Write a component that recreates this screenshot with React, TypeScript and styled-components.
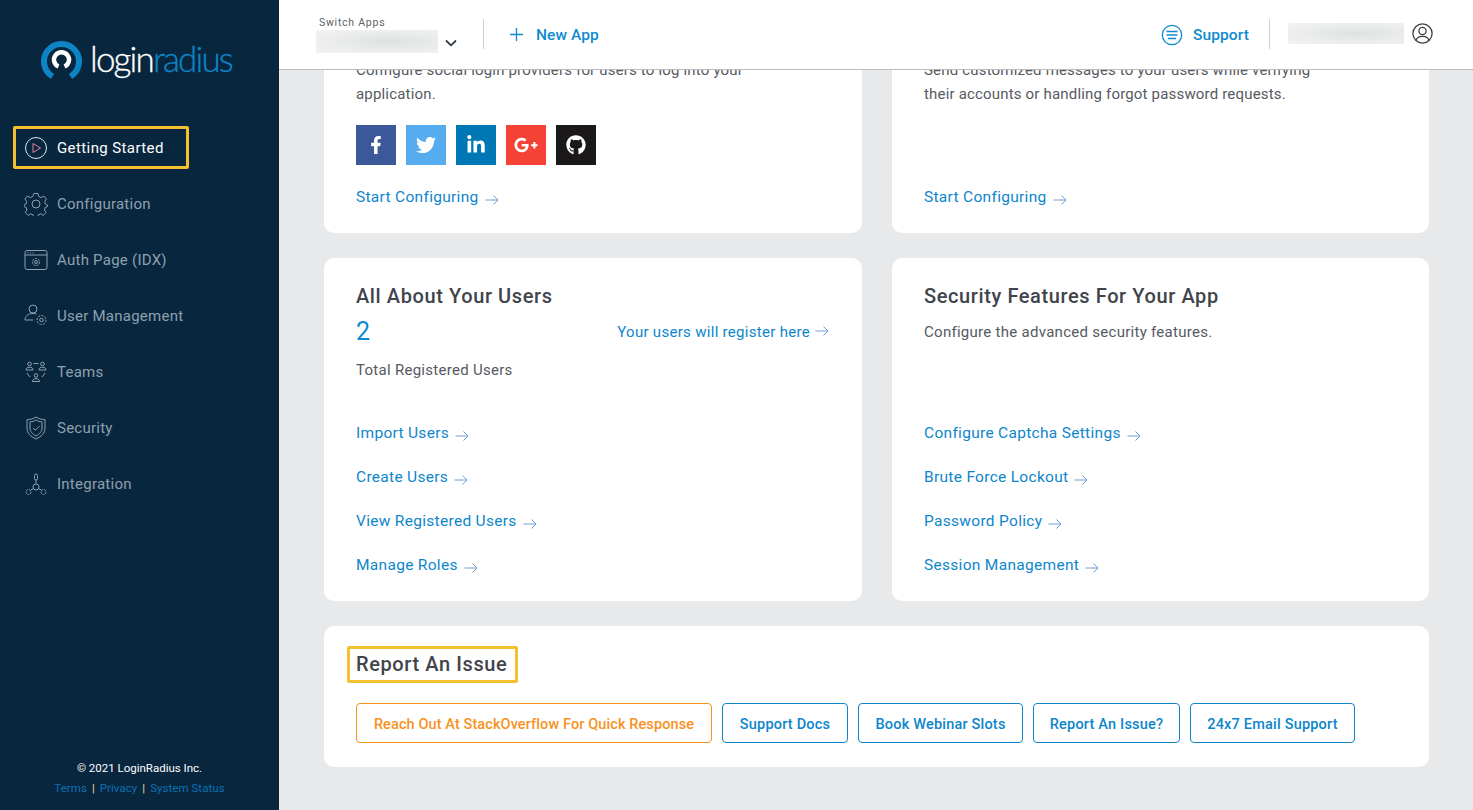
import { useLayoutEffect, useRef } from "react";
import styled, { createGlobalStyle } from "styled-components";
import { FaFacebookF, FaTwitter, FaLinkedinIn, FaGooglePlusG, FaGithub } from "react-icons/fa";

const Global = createGlobalStyle`
  html, body { margin: 0; height: 100%; overflow: hidden; }
  #root { height: 100%; }
  * { box-sizing: border-box; }
  body { font-family: Roboto, "Liberation Sans", sans-serif; }
`;

const Shell = styled.div`
  display: flex;
  height: 810px;
  background: #e8e9eb;
`;
const Sidebar = styled.aside`
  width: 279px;
  flex: none;
  background: #08263e;
  display: flex;
  flex-direction: column;
`;
const LogoRow = styled.div`
  display: flex;
  align-items: center;
  height: 126px;
  padding: 0 0 8px 41px;
  gap: 8px;
`;
const LogoText = styled.span`
  font-family: Lato, sans-serif;
  font-weight: 300;
  font-size: 35px;
  letter-spacing: -1.85px;
  color: #fff;
  line-height: 40px;
  margin-top: -2px;
  -webkit-text-stroke: 0.3px currentColor;
  b { font-weight: 300; color: #0d84c6; }
`;
const Nav = styled.nav`
  display: flex;
  flex-direction: column;
  gap: 13px;
  padding-left: 13px;
  flex: 1;
`;
const NavItem = styled.div<{ $active?: boolean }>`
  display: flex;
  align-items: center;
  width: 176px;
  height: 43px;
  padding-left: 9px;
  gap: 9px;
  white-space: nowrap;
  border: 3px solid ${(p) => (p.$active ? "#f3c130" : "transparent")};
  border-radius: 2px;
  color: ${(p) => (p.$active ? "#fff" : "#8fa0ae")};
  font-size: 15px;
  letter-spacing: ${(p) => (p.$active ? "0.4px" : "0.25px")};
  svg { flex: none; width: 24px; height: 24px; margin-left: -1px; }
`;
const SideFooter = styled.footer`
  text-align: center;
  font-size: 11.5px;
  padding: 0 0 12px;
  line-height: 20px;
  color: #fff;
`;
const FooterLinks = styled.div`
  color: #0c71b4;
  letter-spacing: 0.05px;
  i { font-style: normal; color: #e9d9a0; margin: 0 5px; }
`;

const Column = styled.div`
  flex: 1;
  min-width: 0;
  display: flex;
  flex-direction: column;
`;
const Header = styled.header`
  height: 70px;
  flex: none;
  background: #fff;
  border-bottom: 1px solid #b9bbbd;
  display: flex;
  align-items: center;
  padding: 0 40px 0 37px;
`;
const Switcher = styled.div`
  width: 167px;
  display: flex;
  flex-direction: column;
  margin-top: -1px;
`;
const SwitchLabel = styled.span`
  font-size: 10.5px;
  letter-spacing: 0.75px;
  color: #5a5f66;
  padding: 1px 0 0 3px;
  line-height: 14px;
`;
const SwitchRow = styled.div`
  display: flex;
  align-items: center;
  gap: 7px;
`;
const Blur = styled.div<{ $w: number; $h: number }>`
  width: ${(p) => p.$w}px;
  height: ${(p) => p.$h}px;
  background: radial-gradient(ellipse at 60% 50%, #dfe0e1 0%, #ebecec 55%, #f3f3f3 100%);
`;
const Divider = styled.div`
  width: 1px;
  height: 30px;
  margin-top: -1px;
  background: #cfd1d3;
`;
const HeaderLink = styled.div`
  display: flex;
  align-items: center;
  color: #0d8bd0;
  font-weight: 500;
  font-size: 15.5px;
  letter-spacing: 0.1px;
`;
const NewApp = styled(HeaderLink)`
  margin-left: 25px;
  gap: 12px;
`;
const Support = styled(HeaderLink)`
  margin-left: auto;
  gap: 10px;
`;
const HeaderRight = styled.div`
  display: flex;
  align-items: center;
  margin-left: 20px;
  gap: 18px;
`;
const UserBox = styled.div`
  display: flex;
  align-items: center;
  gap: 8px;
  margin-top: -2px;
`;

const Scroller = styled.main`
  flex: 1;
  overflow: hidden;
`;
const Content = styled.div`
  display: flex;
  flex-direction: column;
  gap: 25px;
  padding: 24px 44px 43px 45px;
`;
const Grid = styled.div`
  display: grid;
  grid-template-columns: 538px 537px;
  column-gap: 30px;
  row-gap: 25px;
`;
const Card = styled.section`
  background: #fff;
  border-radius: 10px;
  padding: 24px 32px;
  color: #4a4f57;
`;
const TopCard = styled(Card)`
  height: 260px;
  display: flex;
  flex-direction: column;
`;
const Title = styled.h2`
  margin: 0;
  font-size: 20px;
  line-height: 28px;
  font-weight: 500;
  letter-spacing: 0.6px;
  color: #40444b;
`;
const Body = styled.p`
  margin: 0;
  font-size: 15px;
  line-height: 24px;
  letter-spacing: 0.28px;
  color: #555a62;
`;
const TopBody = styled(Body)`
  margin-top: 33px;
  max-width: 400px;
  letter-spacing: 0.18px;
`;
const Social = styled.div`
  display: flex;
  gap: 10px;
  margin-top: 19px;
`;
const Tile = styled.div<{ $bg: string }>`
  width: 40px;
  height: 40px;
  background: ${(p) => p.$bg};
  color: #fff;
  display: flex;
  align-items: center;
  justify-content: center;
  font-size: 20px;
`;
const Push = styled.div`
  margin-top: auto;
`;
const LinkText = styled.a`
  display: inline-flex;
  align-items: center;
  gap: 6px;
  color: #0d86cb;
  font-size: 15.5px;
  line-height: 24px;
  letter-spacing: 0.3px;
  white-space: nowrap;
  svg { margin-top: 5px; }
`;
const StatRow = styled.div`
  display: flex;
  align-items: center;
  justify-content: space-between;
  height: 28px;
  margin-top: 8px;
  margin-right: 1px;
`;
const Stat = styled.span`
  font-size: 25px;
  color: #0d8bd0;
  line-height: 28px;
`;
const RegisterLink = styled(LinkText)`
  font-size: 15px;
  letter-spacing: 0.3px;
  gap: 5px;
  svg { margin-top: -2px; }
`;
const StatLabel = styled(Body)`
  margin-top: 12px;
  height: 24px;
`;
const Desc = styled(Body)`
  margin-top: 10px;
  height: 50px;
`;
const LinkList = styled.div`
  display: flex;
  flex-direction: column;
  align-items: flex-start;
  gap: 20px;
  margin-top: 39px;
`;
const DescLinks = styled(LinkList)`
  margin-top: 51px;
`;
const Tall = styled(Card)`
  height: 343px;
`;
const IssueTitle = styled(Title)`
  display: inline-block;
  margin: -4px 0 0 -9px;
  padding: 2px 8px 3px 6px;
  border: 3px solid #f3c130;
  border-radius: 2px;
  font-size: 20px;
  line-height: 26px;
`;
const Buttons = styled.div`
  display: flex;
  gap: 10px;
  margin-top: 20px;
`;
const Btn = styled.button<{ $warn?: boolean; $w: number }>`
  width: ${(p) => p.$w}px;
  height: 40px;
  padding: 2px 0 0;
  background: #fff;
  border: 1px solid ${(p) => (p.$warn ? "#f7921e" : "#0d86cb")};
  color: ${(p) => (p.$warn ? "#f7921e" : "#0d86cb")};
  border-radius: 4px;
  font-family: inherit;
  font-size: 14.5px;
  font-weight: 500;
  letter-spacing: ${(p) => (p.$warn ? "0.1px" : "0.2px")};
`;

const Arrow = () => (
  <svg width="14" height="12" viewBox="0 0 14 12" fill="none" stroke="#6f9fd0" strokeWidth="1">
    <path d="M0.5 6h12.500M8.500 1.500 13 6l-4.500 4.500" />
  </svg>
);

const Item = ({ children }: { children: string }) => (
  <LinkText>
    {children} <Arrow />
  </LinkText>
);

const stroke = { fill: "none", stroke: "currentColor", strokeWidth: 1 };

const PlayIcon = () => (
  <svg viewBox="0 0 24 24" {...stroke}>
    <circle cx="12" cy="12" r="10.500" stroke="#dfe6ea" />
    <path d="M9 7.500v9l7.500-4.500z" stroke="#e87fa0" />
  </svg>
);
const GearIcon = () => (
  <svg viewBox="0 0 24 24" {...stroke}>
    <circle cx="12" cy="12" r="4" />
    <path d="M10 1.500h4l.7 3 2.400 1.100 2.700-1.600 2.700 3-1.700 2.500.5 2.500 2.200 1 0 1.500-2.400 1-.6 2.500 1.600 2.500-2.800 2.900-2.600-1.600-2.300 1-.7 3h-4l-.7-3-2.300-1-2.600 1.600-2.800-2.900 1.600-2.500-.6-2.500-2.400-1 0-1.500 2.200-1 .5-2.500-1.700-2.500 2.700-3 2.700 1.600 2.400-1.100z" />
  </svg>
);
const WindowIcon = () => (
  <svg viewBox="0 0 24 24" {...stroke}>
    <rect x="1" y="2.500" width="22" height="19" rx="2" />
    <path d="M1 7h22M3.500 4.800h1M6 4.800h1M8.500 4.800h1" />
    <circle cx="12" cy="14" r="1.500" />
    <circle cx="12" cy="14" r="3.500" strokeDasharray="2 1" />
  </svg>
);
const UserGearIcon = () => (
  <svg viewBox="0 0 24 24" {...stroke}>
    <circle cx="9" cy="5" r="4" />
    <path d="M1 16c0-4 3-6.500 8-6.500 1.500 0 2.500.2 3.500.6M1 16h8" />
    <circle cx="17.500" cy="16" r="1.800" />
    <circle cx="17.500" cy="16" r="4.500" strokeDasharray="2.200 1.200" />
  </svg>
);
const TeamIcon = () => (
  <svg viewBox="0 0 24 24" {...stroke}>
    <circle cx="5.500" cy="4" r="1.800" />
    <path d="M2 10c0-2 1.500-2.800 3.500-2.800S9 8 9 10z" />
    <circle cx="18.500" cy="4" r="1.800" />
    <path d="M15 10c0-2 1.500-2.800 3.500-2.800S22 8 22 10z" />
    <circle cx="12" cy="15.500" r="1.800" />
    <path d="M8.500 21.500c0-2 1.500-2.800 3.500-2.800s3.500.8 3.500 2.800z" />
    <path d="M9.500 3.500h5M3 13l3 4M21 13l-3 4" />
  </svg>
);
const ShieldIcon = () => (
  <svg viewBox="0 0 24 24" {...stroke}>
    <path d="M12 1c3 2 6 2.500 9 2.500V12c0 5-3.500 8.500-9 11-5.500-2.500-9-6-9-11V3.500C6 3.500 9 3 12 1z" />
    <path d="M12 4c2 1.200 4 1.700 6 1.800V12c0 3.500-2.400 6-6 8-3.600-2-6-4.500-6-8V5.800C8 5.700 10 5.200 12 4z" />
    <path d="M9 12l2.300 2.300L15.500 10" />
  </svg>
);
const NetworkIcon = () => (
  <svg viewBox="0 0 24 24" {...stroke}>
    <circle cx="12" cy="15" r="3" />
    <rect x="10.500" y="2" width="3" height="6" rx="1.500" />
    <path d="M12 8v4M9.500 16.500l-3 1.700M14.500 16.500l3 1.700" />
    <circle cx="4.500" cy="20" r="2.500" strokeDasharray="2 1" />
    <circle cx="19.500" cy="20" r="2.500" strokeDasharray="2 1" />
  </svg>
);

const LoginRadiusMark = () => (
  <svg width="41" height="41" viewBox="0 0 41 41" style={{ flex: "none" }}>
    <path d="M11.500 37.500A17.500 17.500 0 1 1 29.500 37.500" fill="none" stroke="#0d84c6" strokeWidth="6" />
    <path d="M17.500 27.500A7.500 7.500 0 1 1 23.500 27.500" fill="none" stroke="#fff" strokeWidth="4.500" />
  </svg>
);

const Plus = () => (
  <svg width="15" height="15" viewBox="0 0 15 15" stroke="#0d8bd0" strokeWidth="1.300">
    <path d="M7.500 1v13M1 7.500h13" />
  </svg>
);
const Chevron = () => (
  <svg width="12" height="8" viewBox="0 0 12 8" fill="none" stroke="#2f3a44" strokeWidth="1.800" style={{ marginTop: 2 }}>
    <path d="M1 1.500 6 6.300l5-4.800" />
  </svg>
);
const SupportIcon = () => (
  <svg width="22" height="22" viewBox="0 0 22 22" fill="none" stroke="#0d8bd0" strokeWidth="1.300">
    <circle cx="11" cy="11" r="9.700" />
    <path d="M5.500 7.500h11M5.500 11h11M7 14.500h8" />
  </svg>
);
const UserIcon = () => (
  <svg width="21" height="21" viewBox="0 0 21 21" fill="none" stroke="#3b3f45" strokeWidth="1.300">
    <circle cx="10.500" cy="10.500" r="9.600" />
    <circle cx="10.500" cy="8" r="3.600" />
    <path d="M4 17.500c.7-3 3-4.200 6.500-4.200s5.800 1.200 6.500 4.200" />
  </svg>
);

const menu = [
  { label: "Getting Started", icon: <PlayIcon />, active: true },
  { label: "Configuration", icon: <GearIcon /> },
  { label: "Auth Page (IDX)", icon: <WindowIcon /> },
  { label: "User Management", icon: <UserGearIcon /> },
  { label: "Teams", icon: <TeamIcon /> },
  { label: "Security", icon: <ShieldIcon /> },
  { label: "Integration", icon: <NetworkIcon /> },
];

const tiles = [
  { bg: "#3b5998", icon: <FaFacebookF size={18} /> },
  { bg: "#55acee", icon: <FaTwitter /> },
  { bg: "#0077b5", icon: <FaLinkedinIn /> },
  { bg: "#f44336", icon: <FaGooglePlusG size={24} /> },
  { bg: "#1a1818", icon: <FaGithub /> },
];

const buttons = [
  { label: "Support Docs", w: 126 },
  { label: "Book Webinar Slots", w: 165 },
  { label: "Report An Issue?", w: 147 },
  { label: "24x7 Email Support", w: 165 },
];

export default function App() {
  const scroller = useRef<HTMLElement>(null);

  // the page in the shot is scrolled down a bit
  useLayoutEffect(() => {
    if (scroller.current) scroller.current.scrollTop = scroller.current.scrollHeight;
  }, []);

  return (
    <Shell>
      <Global />
      <Sidebar>
        <LogoRow>
          <LoginRadiusMark />
          <LogoText>
            login<b>radius</b>
          </LogoText>
        </LogoRow>
        <Nav>
          {menu.map((m) => (
            <NavItem key={m.label} $active={m.active}>
              {m.icon}
              {m.label}
            </NavItem>
          ))}
        </Nav>
        <SideFooter>
          © 2021 LoginRadius Inc.
          <FooterLinks>
            Terms<i>|</i>Privacy<i>|</i>System Status
          </FooterLinks>
        </SideFooter>
      </Sidebar>
      <Column>
        <Header>
          <Switcher>
            <SwitchLabel>Switch Apps</SwitchLabel>
            <SwitchRow>
              <Blur $w={122} $h={23} />
              <Chevron />
            </SwitchRow>
          </Switcher>
          <Divider />
          <NewApp>
            <Plus />
            New App
          </NewApp>
          <Support>
            <SupportIcon />
            Support
          </Support>
          <HeaderRight>
            <Divider />
            <UserBox>
              <Blur $w={116} $h={21} />
              <UserIcon />
            </UserBox>
          </HeaderRight>
        </Header>
        <Scroller ref={scroller}>
          <Content>
            <Grid>
              <TopCard>
                <Title>Social Login</Title>
                <TopBody>Configure social login providers for users to log into your application.</TopBody>
                <Social>
                  {tiles.map((t) => (
                    <Tile key={t.bg} $bg={t.bg}>
                      {t.icon}
                    </Tile>
                  ))}
                </Social>
                <Push>
                  <Item>Start Configuring</Item>
                </Push>
              </TopCard>
              <TopCard>
                <Title>Email Templates</Title>
                <TopBody>Send customized messages to your users while verifying their accounts or handling forgot password requests.</TopBody>
                <Push>
                  <Item>Start Configuring</Item>
                </Push>
              </TopCard>
              <Tall>
                <Title>All About Your Users</Title>
                <StatRow>
                  <Stat>2</Stat>
                  <RegisterLink>
                    Your users will register here <Arrow />
                  </RegisterLink>
                </StatRow>
                <StatLabel>Total Registered Users</StatLabel>
                <LinkList>
                  <Item>Import Users</Item>
                  <Item>Create Users</Item>
                  <Item>View Registered Users</Item>
                  <Item>Manage Roles</Item>
                </LinkList>
              </Tall>
              <Tall>
                <Title>Security Features For Your App</Title>
                <Desc>Configure the advanced security features.</Desc>
                <DescLinks>
                  <Item>Configure Captcha Settings</Item>
                  <Item>Brute Force Lockout</Item>
                  <Item>Password Policy</Item>
                  <Item>Session Management</Item>
                </DescLinks>
              </Tall>
            </Grid>
            <Card>
              <IssueTitle>Report An Issue</IssueTitle>
              <Buttons>
                <Btn $warn $w={356}>
                  Reach Out At StackOverflow For Quick Response
                </Btn>
                {buttons.map((b) => (
                  <Btn key={b.label} $w={b.w}>
                    {b.label}
                  </Btn>
                ))}
              </Buttons>
            </Card>
          </Content>
        </Scroller>
      </Column>
    </Shell>
  );
}
